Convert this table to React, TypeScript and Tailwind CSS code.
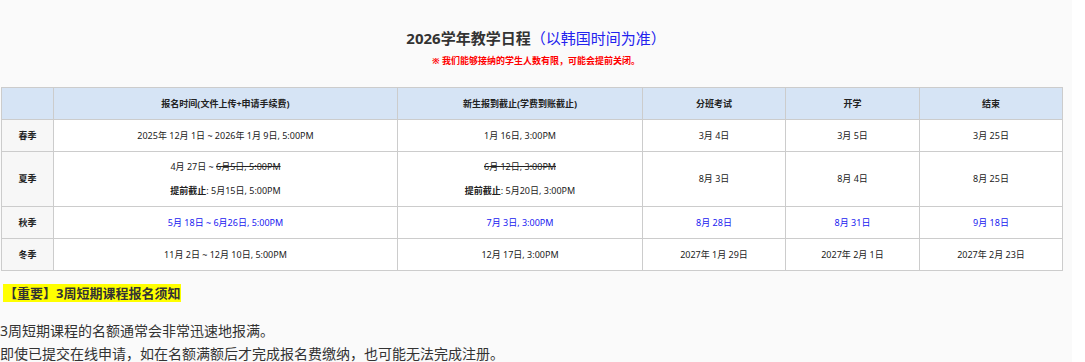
const font = { fontFamily: '"Noto Sans", "Noto Sans CJK SC", sans-serif' };

type Row = {
  season: string
  cells: React.ReactNode[]
  blue?: boolean
}

const rows: Row[] = [
  {
    season: "春季",
    cells: ["2025年 12月 1日 ~ 2026年 1月 9日, 5:00PM", "1月 16日, 3:00PM", "3月 4日", "3月 5日", "3月 25日"],
  },
  {
    season: "夏季",
    cells: [
      <>
        4月 27日 ~ <s>6月5日, 5:00PM</s>
        <br />
        <br />
        <b>提前截止</b>: 5月15日, 5:00PM
      </>,
      <>
        <s>6月 12日, 3:00PM</s>
        <br />
        <br />
        <b>提前截止</b>: 5月20日, 3:00PM
      </>,
      "8月 3日",
      "8月 4日",
      "8月 25日",
    ],
  },
  {
    season: "秋季",
    blue: true,
    cells: ["5月 18日 ~ 6月26日, 5:00PM", "7月 3日, 3:00PM", "8月 28日", "8月 31日", "9月 18日"],
  },
  {
    season: "冬季",
    cells: ["11月 2日 ~ 12月 10日, 5:00PM", "12月 17日, 3:00PM", "2027年 1月 29日", "2027年 2月 1日", "2027年 2月 23日"],
  },
];

const headers = ["报名时间(文件上传+申请手续费)", "新生报到截止(学费到账截止)", "分班考试", "开学", "结束"];

export default function App() {
  return (
    <div className="min-h-[362px] bg-white" style={font}>
      <div className="w-[1072px] min-h-[362px] bg-[#fafafa] pt-[28px]">
        <h2 className="text-center text-[15px] leading-[20px] font-bold text-[#333]">
          2026学年教学日程<span className="font-normal text-[#2222ee]">（以韩国时间为准）</span>
        </h2>
        <p className="mt-[7px] text-center text-[9px] leading-[12px] font-bold text-[#ff0000]">
          ※ 我们能够接纳的学生人数有限，可能会提前关闭。
        </p>
        <table className="mt-[20px] ml-[1px] w-[1061px] table-fixed border-collapse bg-white text-[9px] leading-[12px] text-[#222]">
          <colgroup>
            <col className="w-[52px]" />
            <col className="w-[344px]" />
            <col className="w-[245px]" />
            <col className="w-[143px]" />
            <col className="w-[134px]" />
            <col className="w-[143px]" />
          </colgroup>
          <thead>
            <tr className="bg-[#d6e4f5]">
              <th className="h-[32px] border border-[#cccccc]"></th>
              {headers.map((h) => (
                <th key={h} className="h-[32px] border border-[#cccccc] font-bold">
                  {h}
                </th>
              ))}
            </tr>
          </thead>
          <tbody>
            {rows.map((r) => (
              <tr key={r.season}>
                <td className="h-[32px] border border-[#cccccc] bg-[#f7f7f7] text-center font-bold">{r.season}</td>
                {r.cells.map((c, i) => (
                  <td
                    key={i}
                    className={`border border-[#cccccc] py-[9px] text-center ${r.blue ? "text-[#2020f0]" : ""}`}
                  >
                    {c}
                  </td>
                ))}
              </tr>
            ))}
          </tbody>
        </table>
        <div className="mt-[9px] px-[3px]">
          <span className="bg-[#ffff00] px-[1px] text-[13px] leading-[19px] font-bold text-[#333]">
            【重要】3周短期课程报名须知
          </span>
        </div>
        <div className="mt-[15px] text-[14px] leading-[23px] text-[#333]">
          <p>3周短期课程的名额通常会非常迅速地报满。</p>
          <p>即使已提交在线申请，如在名额满额后才完成报名费缴纳，也可能无法完成注册。</p>
        </div>
      </div>
    </div>
  );
}
